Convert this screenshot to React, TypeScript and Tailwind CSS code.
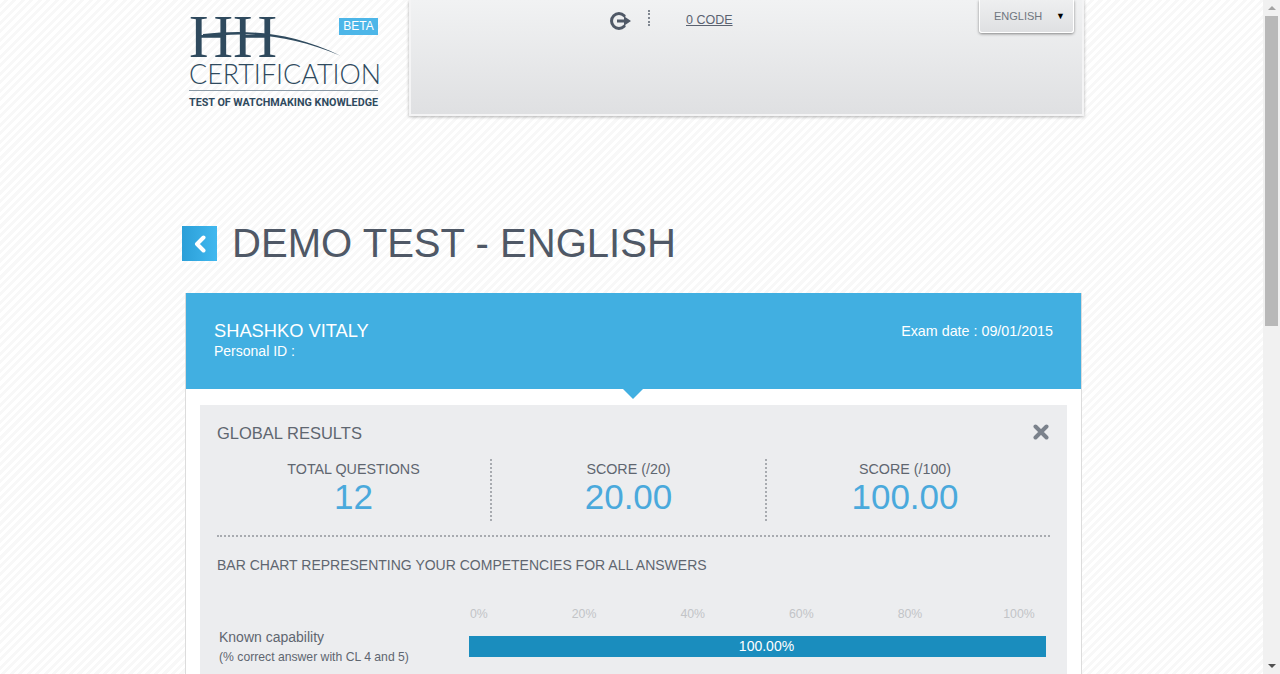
import React from "react";

function Logo() {
  return (
    <div className="relative w-[189px] pt-[14px] text-[#2f4a5e]">
      <div className="flex items-start justify-between h-[46px]">
        <span className="font-['Liberation_Serif',serif] text-[61px] leading-[46px] font-normal">HH</span>
        <span className="mt-[4px] w-[39px] h-[17px] bg-[#4db6e8] text-white text-[12px] leading-[17px] text-center font-['Liberation_Sans',sans-serif]">BETA</span>
      </div>
      <svg className="absolute left-[14px] top-[29px]" width="150" height="34" viewBox="0 0 150 34" fill="none">
        <path d="M0 5 C 40 1, 85 1, 138 27 C 85 4, 40 3, 0 8 Z" fill="#2f4a5e" />
      </svg>
      <div className="font-['Lato',sans-serif] font-light text-[26.9px] leading-[28px] whitespace-nowrap">CERTIFICATION</div>
      <div className="h-px bg-[#8b9aa6] mt-[2px]"></div>
      <div className="font-['Roboto',sans-serif] font-bold text-[10.75px] leading-[12px] mt-[6px] whitespace-nowrap">TEST OF WATCHMAKING KNOWLEDGE</div>
    </div>
  );
}

function Stat({ label, value, border }: { label: string; value: string; border: boolean }) {
  return (
    <div className={`h-[62px] text-center ${border ? "border-r-2 border-dotted border-[#a8abb0]" : ""}`}>
      <div className="text-[14.3px] leading-[20px] text-[#5f6670]">{label}</div>
      <div className="text-[35px] leading-[36px] text-[#4aa9dc]">{value}</div>
    </div>
  );
}

export default function App() {
  return (
    <div className="h-[674px] overflow-hidden flex font-['Liberation_Sans',Arial,sans-serif] bg-[repeating-linear-gradient(135deg,#ffffff_0px,#ffffff_3px,#f8f8f8_3px,#f8f8f8_6px)]">
      <div className="w-[1263px] shrink-0 pl-[182px]">
        <div className="w-[902px] flex h-[115px]">
          <div className="w-[227px] pl-[7px] shrink-0">
            <Logo />
          </div>
          <div className="w-[675px] h-[116px] border-x-2 border-b-2 border-[#f4f4f5] bg-[linear-gradient(180deg,#f1f2f3_0%,#dfe0e2_100%)] shadow-[0_1px_3px_rgba(0,0,0,0.3)] flex items-start">
            <svg className="ml-[199px] mt-[12px]" width="21" height="18" viewBox="0 0 21 18" fill="none">
              <path d="M14.2 3.8 A7.4 7.4 0 1 0 14.2 14.2" stroke="#4f5866" strokeWidth="3" strokeLinecap="round" />
              <path d="M7 7.5h7V4.2L21 9l-7 4.8v-3.3H7z" fill="#4f5866" />
            </svg>
            <div className="ml-[17px] mt-[10px] h-[16px] border-l-2 border-dotted border-[#808790]"></div>
            <a className="ml-[36px] mt-[13px] text-[12.5px] leading-[15px] text-[#5a6270] underline">0 CODE</a>
            <div className="ml-auto mr-[8px] w-[95px] h-[33px] rounded-b-[3px] border border-t-0 border-white bg-[linear-gradient(180deg,#eeeff0,#dfe0e2)] shadow-[0_1px_3px_rgba(0,0,0,0.45)] flex items-start pl-[14px] pr-[8px] pt-[9px]">
              <span className="text-[11px] leading-[14px] text-[#6f7680]">ENGLISH</span>
              <span className="ml-auto text-[9px] leading-[14px] text-black">▼</span>
            </div>
          </div>
        </div>

        <div className="flex items-center mt-[111px] h-[35px]">
          <div className="w-[35px] h-[35px] bg-[linear-gradient(90deg,#2b9fd8,#41b8ef)] flex items-center justify-center">
            <svg width="14" height="18" viewBox="0 0 14 18" fill="none">
              <path d="M10.5 2.5 L4 9 L10.5 15.5" stroke="#fff" strokeWidth="4" strokeLinecap="round" strokeLinejoin="round" />
            </svg>
          </div>
          <h1 className="ml-[15px] text-[40.1px] leading-[35px] text-[#4f5866] whitespace-nowrap">DEMO TEST - ENGLISH</h1>
        </div>

        <div className="ml-[3px] mt-[32px] w-[897px] bg-white border-x border-[#dcdcdc]">
          <div className="relative h-[96px] bg-[#41afe1] px-[28px] pt-[28px] text-white flex justify-between">
            <div>
              <div className="text-[18.3px] leading-[20px]">SHASHKO VITALY</div>
              <div className="text-[14px] leading-[18px] mt-px">Personal ID :</div>
            </div>
            <div className="text-[14.3px] leading-[20px]">Exam date : 09/01/2015</div>
            <div className="absolute left-[437px] top-[96px] w-0 h-0 border-x-[10px] border-x-transparent border-t-[10px] border-t-[#41afe1]"></div>
          </div>
          <div className="mx-[14px] mt-[16px] bg-[#ecedef] px-[17px] pb-[20px] h-[300px]">
            <div className="flex items-start justify-between pt-[18px] h-[54px]">
              <span className="text-[16.5px] leading-[20px] text-[#5f6670]">GLOBAL RESULTS</span>
              <svg width="16" height="16" viewBox="0 0 16 16" className="mt-px mr-px">
                <path d="M2.5 2.5 L13.5 13.5 M13.5 2.5 L2.5 13.5" stroke="#7b828c" strokeWidth="4" strokeLinecap="round" />
              </svg>
            </div>
            <div className="flex items-start">
              <div className="w-[275px]"><Stat label="TOTAL QUESTIONS" value="12" border /></div>
              <div className="w-[275px]"><Stat label="SCORE (/20)" value="20.00" border /></div>
              <div className="w-[276px]"><Stat label="SCORE (/100)" value="100.00" border={false} /></div>
            </div>
            <div className="mt-[14px] border-t-2 border-dotted border-[#a8abb0]"></div>
            <div className="mt-[18px] text-[14px] leading-[20px] text-[#5f6670] whitespace-nowrap">BAR CHART REPRESENTING YOUR COMPETENCIES FOR ALL ANSWERS</div>
            <div className="mt-[32px] flex gap-[84px] ml-[253px] text-[12.3px] leading-[14px] text-[#c2c4c7]">
              <span>0%</span><span>20%</span><span>40%</span><span>60%</span><span>80%</span><span className="-ml-[3px]">100%</span>
            </div>
            <div className="flex mt-[8px]">
              <div className="w-[252px] pl-[2px] text-[#5f6670]">
                <div className="text-[14px] leading-[16px]">Known capability</div>
                <div className="text-[12.2px] leading-[14px] mt-[5px] whitespace-nowrap">(% correct answer with CL 4 and 5)</div>
              </div>
              <div className="w-[577px] h-[21px] mt-[7px] pl-[18px] bg-[#1a8dbe] text-white text-[14px] leading-[21px] text-center">100.00%</div>
            </div>
          </div>
        </div>
      </div>

      <div className="w-[17px] shrink-0 h-full bg-[#f1f1f1] flex flex-col items-center justify-between">
        <div className="flex flex-col items-center w-full">
          <div className="h-[16px] flex items-center justify-center">
            <div className="w-0 h-0 border-x-[4px] border-x-transparent border-b-[4px] border-b-[#a3a3a3]"></div>
          </div>
          <div className="w-[13px] h-[310px] bg-[#b8b8b8]"></div>
        </div>
        <div className="h-[16px] flex items-center justify-center">
          <div className="w-0 h-0 border-x-[4px] border-x-transparent border-t-[4px] border-t-[#505050]"></div>
        </div>
      </div>
    </div>
  );
}
